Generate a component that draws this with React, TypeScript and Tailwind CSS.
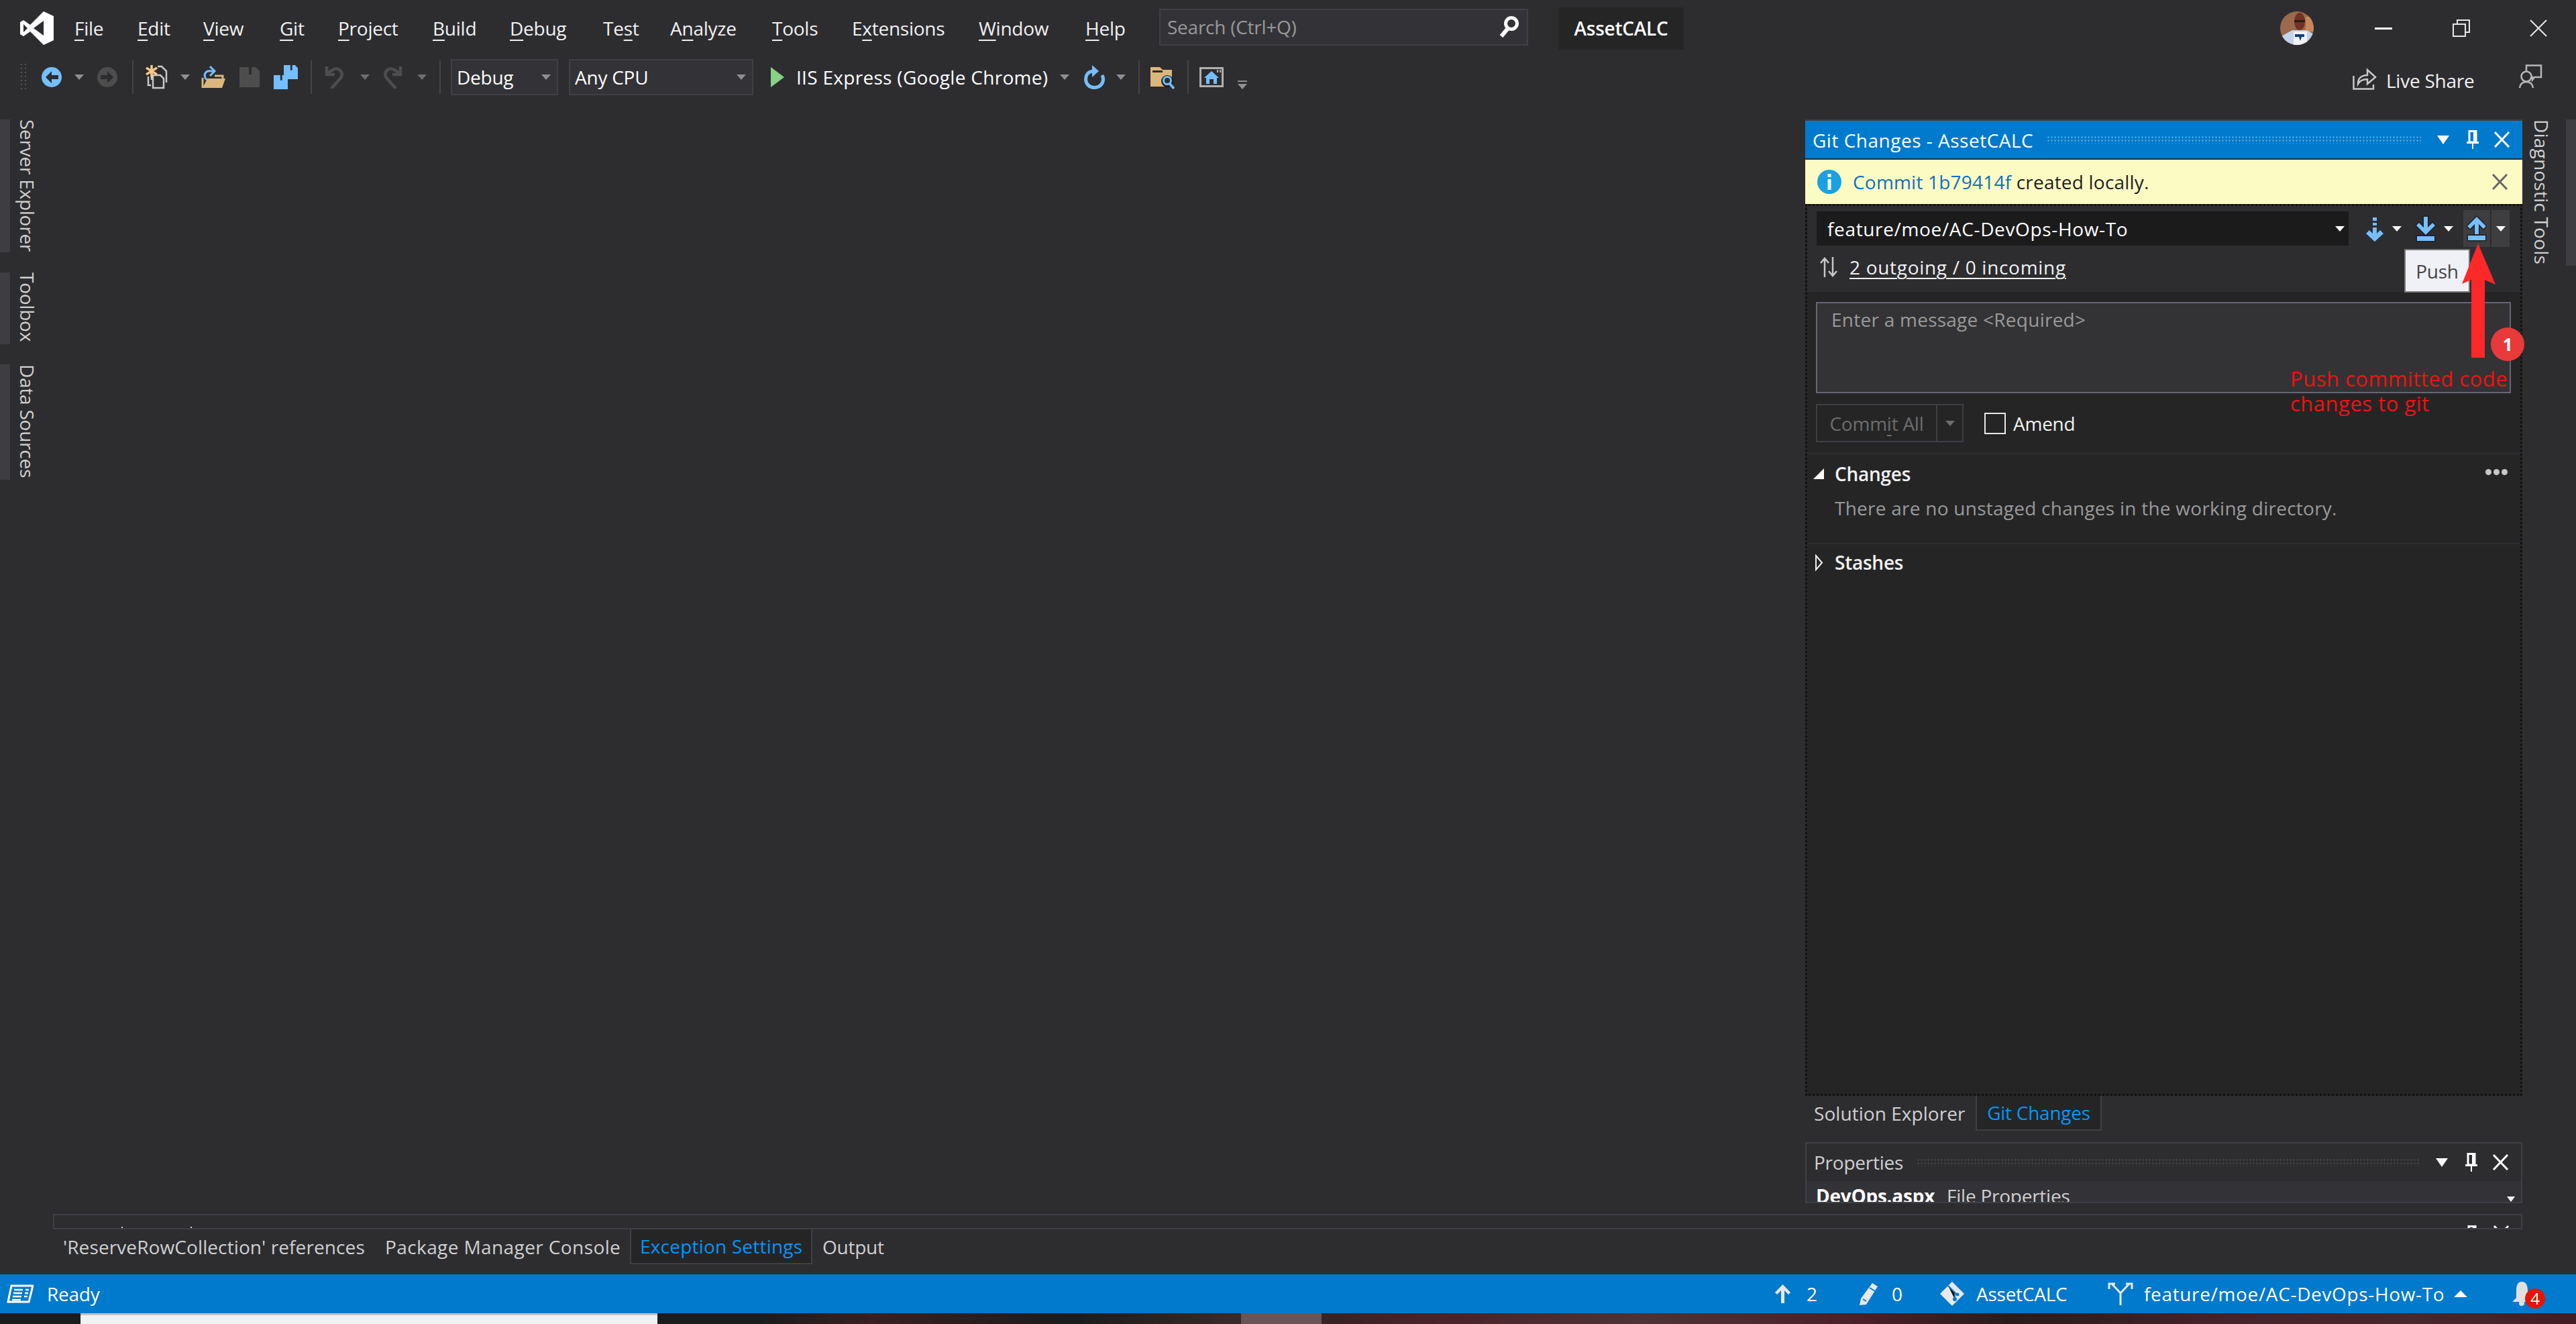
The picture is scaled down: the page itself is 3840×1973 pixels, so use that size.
import type { ReactNode } from "react";

const Caret = ({ className = "", color = "border-t-[#8f8f8f]" }: { className?: string; color?: string }) => (
  <span className={`block h-0 w-0 shrink-0 border-x-[7px] border-t-[8px] border-x-transparent ${color} ${className}`} />
);

const Sep = ({ className = "" }: { className?: string }) => (
  <span className={`block h-[50px] w-[2px] shrink-0 bg-[#444446] ${className}`} />
);

const Menu = ({ before = "", k, after = "" }: { before?: string; k: string; after?: string }) => (
  <span className="whitespace-nowrap text-[#f1f1f1]">
    {before}
    <u className="underline decoration-2 underline-offset-[6px]">{k}</u>
    {after}
  </span>
);

const VsLogo = () => (
  <svg viewBox="0 0 50 50" className="h-[50px] w-[50px] shrink-0">
    <path
      fill="#fff"
      fillRule="evenodd"
      d="M35 0 50 7V43L35 50 15 30 5 37 0 34V16L5 13 15 20ZM5 19V31L11 25ZM35 14 20 25 35 36Z"
    />
  </svg>
);

const Icon = ({ w, h, className = "", children }: { w: number; h: number; className?: string; children: ReactNode }) => (
  <svg viewBox={`0 0 ${w} ${h}`} width={w} height={h} className={`block shrink-0 ${className}`}>
    {children}
  </svg>
);

const Floppy = ({ x = 0, y = 0, s = 30, c = "#4d4d4d" }: { x?: number; y?: number; s?: number; c?: string }) => (
  <g transform={`translate(${x} ${y}) scale(${s / 30})`}>
    <path fill={c} d="M0 0H24L30 6V30H0Z" />
    <path fill="#2d2d30" d="M14 0H18V11H14Z" />
  </g>
);

const PinClose = () => (
  <>
    <svg viewBox="0 0 20 28" className="ml-[25px] block h-[28px] w-[20px] shrink-0">
      <path fill="none" stroke="#fff" strokeWidth="3" d="M5 1.500H15V18H5Z" />
      <path fill="#fff" d="M11 3H15V18H11ZM1 17H19V20H1ZM9 20H11V28H9Z" />
    </svg>
    <svg viewBox="0 0 25 24" className="ml-[21px] block h-[24px] w-[25px] shrink-0">
      <path stroke="#fff" strokeWidth="3" d="M2 1 23 23M23 1 2 23" />
    </svg>
  </>
);

const PushBtn = () => (
  <Icon w={30} h={40}>
    <path fill="#75beff" stroke="#1e1e1e" strokeWidth="3" paintOrder="stroke" d="M15 2 29 16 25 20 18 13V28H12V13L5 20 1 16Z" />
    <path fill="#75beff" stroke="#1e1e1e" strokeWidth="3" paintOrder="stroke" d="M2 30H28V37H2Z" />
  </Icon>
);

const PanelTitle = ({ title, grip, bg = "", color, titleClass = "" }: { title: string; grip: string; bg?: string; color: string; titleClass?: string }) => (
  <div className={`flex h-[56px] shrink-0 items-center ${bg}`}>
    <span className={`ml-[11px] whitespace-nowrap ${color} ${titleClass}`}>{title}</span>
    <span className={`ml-[20px] h-[12px] flex-1 bg-size-[5px_5px] ${grip}`} />
    <span className="ml-[24px] block h-0 w-0 border-x-[9px] border-t-[13px] border-x-transparent border-t-white" />
    <PinClose />
    <span className="w-[18px] shrink-0" />
  </div>
);

const VTab = ({ text, h }: { text: string; h: string }) => (
  <div className={`flex ${h}`}>
    <span className="w-[15px] bg-[#3e3e42]" />
    <span className="ml-[7px] whitespace-nowrap text-[#d0d0d0] [writing-mode:vertical-rl]">{text}</span>
  </div>
);

const disabled = "border-t-[#6e6e6e]";
const white = "border-t-white";

export default function App() {
  return (
    <div className="relative flex h-[1973px] w-[3840px] flex-col overflow-hidden bg-[#2d2d30] font-['Open_Sans',sans-serif] text-[28px] leading-[38px] tracking-[-0.25px] text-[#f1f1f1]">
      {/* title bar */}
      <header className="flex h-[84px] shrink-0 items-center pl-[30px]">
        <VsLogo />
        <nav className="ml-[31px] grid grid-cols-[94px_98px_114px_87px_141px_115px_139px_100px_152px_119px_189px_159px_110px]">
          <Menu k="F" after="ile" />
          <Menu k="E" after="dit" />
          <Menu k="V" after="iew" />
          <Menu k="G" after="it" />
          <Menu k="P" after="roject" />
          <Menu k="B" after="uild" />
          <Menu k="D" after="ebug" />
          <Menu before="Te" k="s" after="t" />
          <Menu before="A" k="n" after="alyze" />
          <Menu k="T" after="ools" />
          <Menu before="E" k="x" after="tensions" />
          <Menu k="W" after="indow" />
          <Menu k="H" after="elp" />
        </nav>
        <div className="mb-[4px] flex h-[55px] w-[550px] items-center justify-between border-2 border-[#3f3f46] bg-[#333337] pl-[10px] pr-[12px] text-[#999999]">
          Search (Ctrl+Q)
          <svg viewBox="0 0 32 32" className="h-[32px] w-[32px]">
            <circle cx="21" cy="11" r="8.500" fill="none" stroke="#fff" strokeWidth="5" />
            <path stroke="#fff" strokeWidth="6" d="M16 18 6 30" />
          </svg>
        </div>
        <div className="ml-[45px] flex h-[63px] w-[187px] items-center justify-center bg-[#252526] font-semibold text-white">AssetCALC</div>
        <svg viewBox="0 0 50 50" className="ml-[889px] h-[50px] w-[50px] shrink-0">
          <defs>
            <clipPath id="ava">
              <circle cx="25" cy="25" r="25" />
            </clipPath>
          </defs>
          <g clipPath="url(#ava)">
            <rect width="50" height="50" fill="#9a6a4a" />
            <rect x="38" y="8" width="12" height="22" fill="#c8875a" />
            <ellipse cx="29" cy="15" rx="8" ry="13" fill="#6e3324" />
            <rect x="21" y="13" width="16" height="3" fill="#2a1a18" />
            <path fill="#c3d3ea" d="M0 38 18 28H40L50 34V50H0Z" />
            <rect x="20" y="30" width="20" height="20" fill="#f0f2f8" />
            <path fill="#123c86" d="M22 34H36V38H32L30 44 28 38H22Z" />
          </g>
        </svg>
        <span className="ml-[91px] h-[3px] w-[26px] shrink-0 bg-white" />
        <svg viewBox="0 0 26 26" className="ml-[90px] h-[26px] w-[26px] shrink-0" fill="none" stroke="#e8e8e8" strokeWidth="2">
          <path d="M1 7H19V25H1ZM7 7V1H25V19H19" />
        </svg>
        <svg viewBox="0 0 26 26" className="ml-[89px] h-[26px] w-[26px] shrink-0" stroke="#e8e8e8" strokeWidth="2">
          <path d="M1 1 25 25M25 1 1 25" />
        </svg>
      </header>

      {/* toolbar */}
      <div className="flex h-[62px] shrink-0 items-center pl-[29px]">
        <span className="h-[44px] w-[12px] shrink-0 bg-[radial-gradient(#555_1.500px,transparent_1.500px)] bg-size-[6px_6px]" />
        <Icon w={30} h={30} className="ml-[21px]">
          <circle cx="15" cy="15" r="15" fill="#75beff" />
          <path fill="#2d2d30" d="M15 6 6 15 15 24V18H25V12H15Z" />
        </Icon>
        <Caret className="ml-[19px]" />
        <Icon w={30} h={30} className="ml-[20px]">
          <circle cx="15" cy="15" r="15" fill="#4d4d4d" />
          <path fill="#2d2d30" d="M15 6 24 15 15 24V18H5V12H15Z" />
        </Icon>
        <Sep className="ml-[22px]" />
        <Icon w={33} h={36} className="ml-[18px]">
          <path fill="none" stroke="#c8c8c8" strokeWidth="2.500" d="M18 2H24L31 9V26M9 22V10M11 15H22L27 20V34H11ZM4 17V30H8" />
          <path stroke="#f5c78a" strokeWidth="3.500" d="M9 0V18M1 4 17 14M17 4 1 14" />
        </Icon>
        <Caret className="ml-[19px]" />
        <Icon w={36} h={34} className="ml-[17px]">
          <path fill="none" stroke="#dcb67a" strokeWidth="3" d="M20 15H32V22M2 18V33" />
          <path fill="#dcb67a" d="M9 19H36L31 33H2Z" />
          <path fill="none" stroke="#75beff" strokeWidth="3" d="M8 21C2 14 6 6 15 8H19M13 1 20 8 13 15" />
        </Icon>
        <Icon w={30} h={30} className="ml-[21px]">
          <Floppy />
        </Icon>
        <Icon w={36} h={36} className="ml-[21px]">
          <Floppy x={15} s={21} c="#75beff" />
          <Floppy y={15} s={21} c="#75beff" />
        </Icon>
        <Sep className="ml-[19px]" />
        <Icon w={29} h={34} className="ml-[19px]">
          <path fill="none" stroke="#4d4d4d" strokeWidth="4.500" d="M10 34 24 18C29 10 22 3 14 5L4 11M3 1V13H15" />
        </Icon>
        <Caret className="ml-[24px]" color={disabled} />
        <Icon w={29} h={34} className="ml-[20px]">
          <path fill="none" stroke="#4d4d4d" strokeWidth="4.500" d="M19 34 5 18C0 10 7 3 15 5L25 11M26 1V13H14" />
        </Icon>
        <Caret className="ml-[22px]" color={disabled} />
        <Sep className="ml-[19px]" />
        <div className="ml-[15px] flex h-[54px] w-[160px] shrink-0 items-center justify-between border-2 border-[#3f3f46] bg-[#333337] pl-[7px] pr-[9px] text-white">
          Debug
          <Caret />
        </div>
        <div className="ml-[16px] flex h-[54px] w-[275px] shrink-0 items-center justify-between border-2 border-[#3f3f46] bg-[#333337] pl-[7px] pr-[9px] text-white">
          Any CPU
          <Caret />
        </div>
        <Icon w={20} h={30} className="ml-[26px]">
          <path fill="#89d185" d="M0 0 20 15 0 30Z" />
        </Icon>
        <span className="ml-[18px] w-[378px] shrink-0 whitespace-nowrap tracking-[0.3px] text-white">IIS Express (Google Chrome)</span>
        <Caret className="ml-[15px]" />
        <Icon w={31} h={36} className="ml-[22px]">
          <path
            fill="none"
            stroke="#75beff"
            strokeWidth="5"
            d="M13 9C5 10 2.500 16 2.500 21C2.500 28 8 33.500 15 33.500C23 33.500 28.500 28 28.500 21C28.500 19 28 17 27 15"
          />
          <path fill="#75beff" d="M12 0 22 9 12 18Z" />
        </Icon>
        <Caret className="ml-[17px]" />
        <Sep className="ml-[19px]" />
        <Icon w={37} h={36} className="ml-[16px]">
          <path fill="#dcb67a" d="M0 3H14L18 7H32V32H0Z" />
          <path fill="#2d2d30" d="M3 8H18V11H3Z" />
          <circle cx="25" cy="24" r="8" fill="#2d2d30" stroke="#1e1e1e" strokeWidth="2" />
          <circle cx="25" cy="23" r="5.500" fill="none" stroke="#75beff" strokeWidth="3" />
          <path stroke="#75beff" strokeWidth="3.500" d="M28 27 35 35" />
        </Icon>
        <Sep className="ml-[18px]" />
        <Icon w={36} h={30} className="ml-[16px]">
          <path fill="none" stroke="#b0b0b0" strokeWidth="3" d="M1.500 1.500H34.500V28.500H1.500Z" />
          <path fill="#75beff" d="M18 6 29 16H26V25H10V16H7Z" />
          <path fill="#2d2d30" d="M15 18H21V25H15Z" />
          <path stroke="#b0b0b0" strokeWidth="2" d="M27 4V8M31 4V8" />
        </Icon>
        <div className="ml-[21px] mt-[22px] flex w-[16px] shrink-0 flex-col gap-[3px]">
          <span className="h-[2px] w-[14px] bg-[#8f8f8f]" />
          <Caret />
        </div>
        <Icon w={36} h={33} className="ml-[1646px] mt-[5px]">
          <path fill="none" stroke="#c8c8c8" strokeWidth="2.500" d="M1.500 12V31.500H31V25M8 24C8 16 13 11 22 11V3L34 14 22 24V17C15 17 11 19 8 24Z" />
        </Icon>
        <span className="ml-[14px] mt-[10px] w-[134px] shrink-0 whitespace-nowrap text-[#f1f1f1]">Live Share</span>
        <Icon w={36} h={36} className="ml-[63px] -mt-[3px]">
          <path fill="none" stroke="#b8b8b8" strokeWidth="2.500" d="M12 10V1.500H34V19H24L21 23V19H20M2 35C3 28 7 26 12 26C17 26 21 28 22 35" />
          <circle cx="12" cy="18" r="7.500" fill="#2d2d30" stroke="#b8b8b8" strokeWidth="2.500" />
        </Icon>
      </div>

      {/* main area */}
      <div className="flex min-h-0 flex-1">
        <aside className="flex w-[79px] shrink-0 flex-col gap-[30px] pt-[32px]">
          <VTab text="Server Explorer" h="h-[198px]" />
          <VTab text="Toolbox" h="h-[107px]" />
          <VTab text="Data Sources" h="h-[172px]" />
        </aside>

        <main className="flex-1" />

        {/* git changes */}
        <section className="flex w-[1069px] shrink-0 flex-col pt-[32px]">
          <div className="border-t-2 border-[#3f3f46]">
            <PanelTitle
              title="Git Changes - AssetCALC"
              titleClass="pt-[2px] tracking-[0.5px]"
              bg="bg-[#007acc]"
              color="text-white"
              grip="bg-[radial-gradient(#59a8da_1.200px,transparent_1.200px)]"
            />
          </div>
          <div className="mt-[2px] flex h-[66px] shrink-0 items-center bg-[#fdfbc4] pl-[18px] text-[#1e1e1e]">
            <Icon w={36} h={36}>
              <circle cx="18" cy="18" r="18" fill="#1ba1e2" />
              <path fill="#fff" d="M15.500 6H20.500V11H15.500ZM15.500 14H20.500V30H15.500Z" />
            </Icon>
            <span className="ml-[17px] whitespace-nowrap tracking-[0.2px]">
              <span className="text-[#0e70c0]">Commit 1b79414f</span> created locally.
            </span>
            <svg viewBox="0 0 23 24" className="ml-auto mr-[22px] block h-[24px] w-[23px]">
              <path stroke="#666" strokeWidth="3" d="M1 1 22 23M22 1 1 23" />
            </svg>
          </div>

          <div className="flex min-h-0 flex-1 flex-col border-[3px] border-dotted border-[#111] bg-[#252526]">
            <div className="h-[128px] shrink-0 bg-[#2d2d30]">
              <div className="mt-[6px] flex h-[55px] items-center pl-[14px]">
                <div className="flex h-[51px] w-[793px] shrink-0 items-center justify-between bg-[#1b1b1c] pl-[16px] pr-[6px] tracking-[0.65px] text-white">
                  feature/moe/AC-DevOps-How-To
                  <Caret color={white} />
                </div>
                <Icon w={28} h={38} className="ml-[25px]">
                  <path fill="#75beff" d="M11 2H17V7H11ZM11 10H17V14H11ZM11 17H17V26L22 21 27 26 14 38 1 26 6 21 11 26Z" />
                </Icon>
                <Caret className="ml-[12px]" color={white} />
                <Icon w={30} h={40} className="ml-[21px]">
                  <path fill="#75beff" stroke="#1e1e1e" strokeWidth="3" paintOrder="stroke" d="M12 2H18V18L25 11 29 15 15 29 1 15 5 11 12 18Z" />
                  <path fill="#75beff" stroke="#1e1e1e" strokeWidth="3" paintOrder="stroke" d="M2 31H28V38H2Z" />
                </Icon>
                <Caret className="ml-[12px]" color={white} />
                <div className="ml-[15px] flex h-[55px] w-[40px] shrink-0 items-center justify-center bg-[#3e3e40]">
                  <PushBtn />
                </div>
                <div className="ml-[2px] flex h-[55px] w-[27px] shrink-0 items-center justify-center bg-[#3e3e40]">
                  <Caret color={white} />
                </div>
              </div>
              <div className="mt-[10px] flex h-[40px] items-center pl-[19px]">
                <Icon w={26} h={30}>
                  <path fill="none" stroke="#c8c8c8" strokeWidth="2.500" d="M7 30V3M1 9 7 2 13 9M19 0V27M13 21 19 28 25 21" />
                </Icon>
                <span className="ml-[18px] whitespace-nowrap tracking-[0.7px] text-[#f1f1f1] underline decoration-2 underline-offset-[5px]">2 outgoing / 0 incoming</span>
              </div>
            </div>

            <div className="ml-[13px] mt-[15px] h-[136px] w-[1036px] shrink-0 border-2 border-[#666674] bg-[#333335] pl-[21px] pt-[5px] tracking-[0.25px] text-[#9a9a9a]">
              Enter a message &lt;Required&gt;
            </div>

            <div className="ml-[13px] mt-[16px] flex h-[57px] shrink-0 items-center">
              <div className="flex h-[57px] w-[220px] shrink-0 border-2 border-[#3f3f46] text-[#6d6d6d]">
                <span className="flex w-[177px] items-center justify-center">
                  <span>
                    Comm<u className="underline decoration-2 underline-offset-[6px]">i</u>t All
                  </span>
                </span>
                <span className="flex flex-1 items-center justify-center border-l-2 border-[#3f3f46]">
                  <Caret color="border-t-[#6d6d6d]" />
                </span>
              </div>
              <span className="ml-[31px] h-[32px] w-[32px] shrink-0 border-2 border-[#e8e8e8] bg-[#252526]" />
              <span className="ml-[11px] text-[#f1f1f1]">Amend</span>
            </div>

            <div className="mt-[16px] h-[2px] shrink-0 bg-[#2d2d30]" />
            <div className="flex h-[58px] shrink-0 items-center pl-[9px] pr-[19px]">
              <span className="block h-0 w-0 shrink-0 border-b-[16px] border-l-[16px] border-b-white border-l-transparent" />
              <span className="ml-[16px] font-semibold text-[#f1f1f1]">Changes</span>
              <span className="ml-auto mb-[6px] flex gap-[3px]">
                <span className="h-[9px] w-[9px] rounded-full bg-[#c8c8c8]" />
                <span className="h-[9px] w-[9px] rounded-full bg-[#c8c8c8]" />
                <span className="h-[9px] w-[9px] rounded-full bg-[#c8c8c8]" />
              </span>
            </div>
            <div className="flex h-[44px] shrink-0 items-center pl-[41px] tracking-[0.25px] text-[#9a9a9a]">There are no unstaged changes in the working directory.</div>
            <div className="mt-[30px] h-[2px] shrink-0 bg-[#2d2d30]" />
            <div className="flex h-[54px] shrink-0 items-center pl-[12px]">
              <Icon w={12} h={25}>
                <path fill="none" stroke="#f1f1f1" strokeWidth="2" d="M1 2 10 12.500 1 23Z" />
              </Icon>
              <span className="ml-[17px] font-semibold text-[#f1f1f1]">Stashes</span>
            </div>
          </div>

          {/* tool window tabs */}
          <div className="flex h-[52px] shrink-0 items-center">
            <span className="w-[254px] shrink-0 pl-[13px] tracking-[0.05px] text-[#d0d0d0]">Solution Explorer</span>
            <span className="flex h-[52px] w-[188px] items-center justify-center border-x-2 border-b-2 border-[#3f3f46] bg-[#252526] text-[#0097fb]">Git Changes</span>
          </div>

          <div className="mt-[17px] h-[91px] shrink-0 overflow-hidden border-2 border-[#3f3f46]">
            <PanelTitle title="Properties" color="text-[#d0d0d0]" grip="bg-[radial-gradient(#46464a_1.200px,transparent_1.200px)]" />
            <div className="flex h-[34px] items-start overflow-hidden bg-[#333337] pl-[14px] pr-[9px] pt-[3px]">
              <span className="font-bold text-white">DevOps.aspx</span>
              <span className="ml-[18px] text-[#d0d0d0]">File Properties</span>
              <span className="ml-auto mt-[20px] block h-0 w-0 border-x-[6px] border-t-[8px] border-x-transparent border-t-white" />
            </div>
          </div>
          <div className="h-[16px] shrink-0" />
        </section>

        <aside className="flex w-[80px] shrink-0 justify-end pt-[32px]">
          <span className="h-[218px] whitespace-nowrap pr-[17px] tracking-[0.2px] text-[#d0d0d0] [writing-mode:vertical-rl]">Diagnostic Tools</span>
          <span className="h-[218px] w-[15px] bg-[#3e3e42]" />
        </aside>
      </div>

      {/* bottom tool strip */}
      <div className="ml-[79px] flex h-[23px] w-[3681px] shrink-0 items-start overflow-hidden border-x-2 border-t-2 border-b-2 border-[#3f3f46]">
        <span className="ml-[100px] mt-[17px] h-[2px] w-[2px] bg-[#d0d0d0]" />
        <span className="ml-[101px] mt-[17px] h-[2px] w-[2px] bg-[#d0d0d0]" />
        <div className="ml-auto mt-[15px] flex shrink-0 items-start pr-[17px]">
          <PinClose />
        </div>
      </div>
      <div className="ml-[79px] flex h-[67px] shrink-0 items-start text-[#d0d0d0]">
        <span className="flex h-[52px] w-[480px] items-center whitespace-nowrap pl-[15px] tracking-[0.1px]">'ReserveRowCollection' references</span>
        <span className="flex h-[52px] w-[380px] items-center whitespace-nowrap pl-[15px] tracking-[0.4px]">Package Manager Console</span>
        <span className="flex h-[52px] w-[272px] items-center whitespace-nowrap border-x-2 border-b-2 border-[#3f3f46] bg-[#252526] pl-[13px] tracking-[0.2px] text-[#0097fb]">Exception Settings</span>
        <span className="flex h-[52px] items-center pl-[15px]">Output</span>
      </div>

      {/* status bar */}
      <footer className="flex h-[58px] shrink-0 items-center bg-[#007acc] text-white">
        <Icon w={40} h={28} className="ml-[10px]">
          <path fill="none" stroke="#fff" strokeWidth="3" d="M7 2H39L33 26H2Z" />
          <path stroke="#fff" strokeWidth="2.500" d="M11 8H24M10 13H23M9 18H22M8 23H21M28 8H33M27 13H32M26 18H31" />
        </Icon>
        <span className="ml-[20px]">Ready</span>
        <Icon w={25} h={28} className="ml-auto">
          <path fill="#e8e8e8" d="M12.500 0 24 12 21 15 15 9V28H10V9L4 15 1 12Z" />
        </Icon>
        <span className="ml-[23px] w-[15px]">2</span>
        <Icon w={30} h={34} className="ml-[62px]">
          <path fill="#e8e8e8" d="M21 1 29 6 12 33 2 34 4 24Z" />
          <path stroke="#007acc" strokeWidth="2" d="M17 8 25 13M7 25 12 28" />
        </Icon>
        <span className="ml-[20px] w-[15px]">0</span>
        <Icon w={36} h={36} className="ml-[57px]">
          <path fill="#e8e8e8" d="M18 0 36 18 18 36 0 18Z" />
          <path stroke="#007acc" strokeWidth="2" d="M12 6 22 16V26M20 14 26 20" />
          <circle cx="22" cy="26" r="3" fill="#007acc" />
          <circle cx="26" cy="19" r="2.500" fill="#007acc" />
        </Icon>
        <span className="ml-[18px] w-[140px] whitespace-nowrap">AssetCALC</span>
        <Icon w={38} h={34} className="ml-[56px]">
          <path fill="none" stroke="#e8e8e8" strokeWidth="3" d="M19 34V16L6 2M19 16 32 2M2 10V2H11M27 2H36V10" />
        </Icon>
        <span className="ml-[16px] w-[446px] whitespace-nowrap tracking-[0.65px]">feature/moe/AC-DevOps-How-To</span>
        <span className="ml-[16px] block h-0 w-0 border-x-[10px] border-b-[10px] border-x-transparent border-b-white" />
        <div className="relative ml-[66px] mr-[65px] h-[36px] w-[31px] shrink-0">
          <svg viewBox="0 0 31 36" className="block h-[36px] w-[31px]">
            <path fill="#e0e0e0" d="M15 0C22 0 24 6 24 14V24L30 30H1L7 24V14C7 6 9 0 15 0Z" />
            <circle cx="15" cy="32" r="4" fill="#e0e0e0" />
          </svg>
          <span className="absolute left-[20px] top-[10px] flex h-[30px] w-[30px] items-center justify-center rounded-full bg-[#e51400] text-[24px] leading-none text-white">4</span>
        </div>
      </footer>

      {/* desktop behind the window */}
      <div className="flex h-[16px] shrink-0 bg-[linear-gradient(90deg,#1c1c1c_0,#1c1c1c_1130px,#3a201f_1300px,#1c1c1c_1600px,#3a2a24_1840px,#3a2222_1980px,#4a2426_2150px,#4e3234_2450px,#4a2024_2780px,#2a1c1a_3000px,#45222a_3300px,#48282c_3600px,#421e22_3840px)]">
        <div className="ml-[120px] w-[860px] border-t-[3px] border-[#c4c4c4] bg-[#f1f1f1]" />
        <div className="ml-[870px] w-[120px] bg-[#6b5552]" />
      </div>

      {/* annotation over the push button */}
      <div className="absolute left-[3584px] top-[371px] flex h-[65px] w-[98px] items-center justify-center border-2 border-[#767676] bg-[#f0f0f7] text-[#444444]">Push</div>
      <svg viewBox="0 0 50 171" className="absolute left-[3670px] top-[363px] h-[171px] w-[50px]">
        <path fill="#ff2828" d="M24 0 50 61 34 54V170H14V54L0 60Z" />
      </svg>
      <div className="absolute left-[3713px] top-[488px] flex h-[50px] w-[50px] items-center justify-center rounded-full bg-[#e83a3a] text-[26px] font-bold text-white">1</div>
      <div className="absolute left-[3414px] top-[546px] w-[346px] whitespace-nowrap text-[31px] leading-[37px] tracking-[0.5px] text-[#f41010]">
        Push committed code
        <br />
        changes to git
      </div>
    </div>
  );
}
